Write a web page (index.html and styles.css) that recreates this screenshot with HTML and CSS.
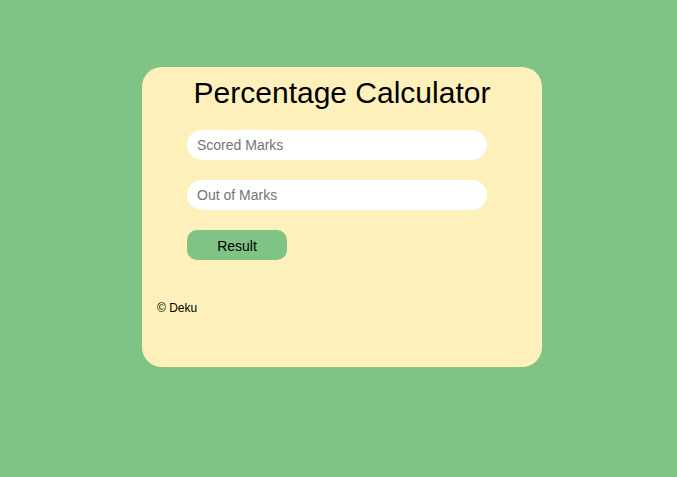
FILE: index.html
```html
<!DOCTYPE html>
<html lang="en">
<head>
<meta charset="utf-8">
<title>Percentage Calculator</title>
<link rel="stylesheet" href="styles.css">
</head>
<body>
<main class="page">
  <section class="card">
    <h1 class="title">Percentage Calculator</h1>
    <form class="form">
      <input class="field" type="number" placeholder="Scored Marks">
      <input class="field" type="number" placeholder="Out of Marks">
      <button class="btn" type="button">Result</button>
    </form>
    <footer class="footer">© Deku</footer>
  </section>
</main>
</body>
</html>
```

FILE: styles.css
```css
html, body {
  margin: 0;
  padding: 0;
  height: 100%;
}
body {
  background: #7fc485;
  font-family: "Liberation Sans", Arial, sans-serif;
  color: #000;
}
.page {
  display: flex;
  justify-content: center;
  padding-top: 67px;
  padding-left: 7px;
}
.card {
  width: 400px;
  height: 300px;
  box-sizing: border-box;
  background: #fef0bb;
  border-radius: 20px;
  padding-top: 8px;
  display: flex;
  flex-direction: column;
}
.title {
  margin: 0;
  font-size: 30px;
  font-weight: normal;
  line-height: 36px;
  text-align: center;
}
.form {
  display: flex;
  flex-direction: column;
  align-items: flex-start;
  gap: 20px;
  margin: 19px 0 0 45px;
}
.field {
  width: 300px;
  height: 30px;
  box-sizing: border-box;
  border: none;
  border-radius: 15px;
  background: #fff;
  padding: 0 10px;
  font-family: "Liberation Sans", Arial, sans-serif;
  font-size: 14px;
  color: #000;
  outline: none;
  -moz-appearance: textfield;
}
.field::-webkit-outer-spin-button,
.field::-webkit-inner-spin-button {
  -webkit-appearance: none;
  margin: 0;
}
.field::placeholder {
  color: #757575;
}
.btn {
  width: 100px;
  height: 30px;
  border: none;
  border-radius: 10px;
  background: #7fc485;
  font-family: "Liberation Sans", Arial, sans-serif;
  font-size: 14px;
  color: #000;
  padding: 2px 0 0;
  cursor: pointer;
}
.footer {
  margin: 41px 0 0 15px;
  font-size: 12px;
  line-height: 14px;
}
```
